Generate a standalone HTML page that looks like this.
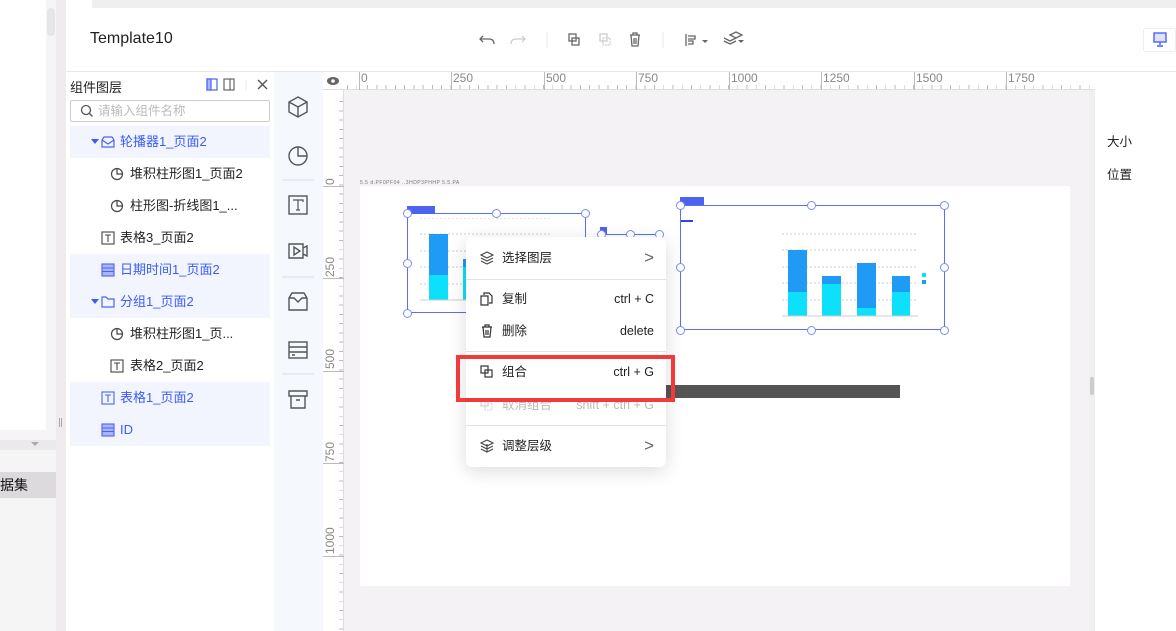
<!DOCTYPE html>
<html><head><meta charset="utf-8"><style>
*{margin:0;padding:0;box-sizing:border-box}
html,body{width:1176px;height:631px;overflow:hidden}
body{position:relative;background:#fff;font-family:"Liberation Sans","Noto Sans CJK SC",sans-serif;color:#222}
.a{position:absolute}
.row{position:absolute;left:70px;width:200px;height:32px;font-size:13px;line-height:32px}
.sel{background:#f3f5fe;color:#3b5cf5}
.mi{position:absolute;left:466px;width:200px;height:32px;font-size:12.5px;line-height:32px;color:#222}
.mi .k{position:absolute;right:12px;top:0}
.mi .t{position:absolute;left:36px}
.mi svg{position:absolute;left:14px;top:9px}
.h{position:absolute;width:9px;height:9px;border:1.3px solid #7b8cf7;border-radius:50%;background:#fff}
.rl{position:absolute;font-size:12px;color:#888}
</style></head><body>
<div class="a" style="left:0;top:0;width:56px;height:631px;background:#f5f5f5"></div>
<div class="a" style="left:0;top:0;width:46px;height:430px;background:#fff"></div>
<div class="a" style="left:46px;top:0;width:10px;height:430px;background:#f5f5f5"></div>
<div class="a" style="left:47px;top:8px;width:8px;height:28px;background:#e6e6e6;border-radius:4px"></div>
<div class="a" style="left:0;top:440px;width:56px;height:10px;background:#ece9ec"></div>
<div class="a" style="left:31px;top:442px;width:0;height:0;border-left:4px solid transparent;border-right:4px solid transparent;border-top:4px solid #aaa"></div>
<div class="a" style="left:0;top:472px;width:56px;height:26px;background:#dcdadc;font-size:14px;line-height:26px;color:#111">据集</div>
<div class="a" style="left:56px;top:0;width:10px;height:631px;background:#efebef"></div>
<div class="a" style="left:59px;top:418px;width:3px;height:9px;border-left:1px solid #aaa;border-right:1px solid #aaa"></div>
<div class="a" style="left:66px;top:0;width:1110px;height:8px;background:#f0eff0"></div>
<div class="a" style="left:66px;top:0;width:26px;height:8px;background:#fff"></div>
<div class="a" style="left:90px;top:30px;font-size:16px;color:#222">Template10</div>
<div class="a" style="left:66px;top:71px;width:1110px;height:1px;background:#e8e8ec"></div>
<svg class="a" style="left:478px;top:30px" width="280" height="20" fill="none" stroke="#666" stroke-width="1.3">
<path d="M5 6 L2 9 L5 12 M2 9 H11 Q16 9 16 14"/>
<path d="M44 6 L47 9 L44 12 M47 9 H38 Q33 9 33 14" stroke="#ccc"/>
<line x1="69" y1="2" x2="69" y2="18" stroke="#eee"/>
<rect x="91" y="4" width="7" height="7"/><rect x="94" y="8" width="7" height="7"/>
<rect x="122" y="4" width="7" height="7" stroke="#ccc"/><rect x="125" y="8" width="7" height="7" stroke="#ccc" stroke-dasharray="1.5 1"/>
<path d="M152 5h10M155 5v-2h4v2M153 5l1 11h6l1-11M156 8v6M158 8v6"/>
<line x1="185" y1="2" x2="185" y2="18" stroke="#eee"/>
<path d="M208 4v12M210 6h7v3h-7M210 11h5v3h-5"/><path d="M224 10l3 3 3-3z" fill="#666" stroke="none"/>
<path d="M252 5l6-3 6 3-6 3z"/><path d="M246 8l6 3 6-3M246 11l6 3 6-3"/><path d="M260 10l3 3 3-3z" fill="#666" stroke="none"/>
</svg>
<div class="a" style="left:1143px;top:28px;width:33px;height:24px;border:1px solid #eee;border-radius:3px"></div>
<svg class="a" style="left:1153px;top:32px" width="14" height="16" fill="none" stroke="#4b63f0" stroke-width="1.4"><rect x="1" y="1" width="12" height="9" fill="#dde3ff"/><path d="M7 10v3M4 14h6"/></svg>
<div class="a" style="left:70px;top:77px;font-size:13px">组件图层</div>
<svg class="a" style="left:206px;top:78px" width="64" height="14" fill="none" stroke-width="1.2"><rect x="1" y="1" width="10" height="11" stroke="#4b63f0"/><rect x="1" y="1" width="4" height="11" fill="#a9b6fb" stroke="#4b63f0"/><rect x="18" y="1" width="10" height="11" stroke="#666"/><line x1="24" y1="1" x2="24" y2="12" stroke="#666"/><line x1="40" y1="2" x2="40" y2="12" stroke="#eee"/><path d="M52 2l9 9M61 2l-9 9" stroke="#555" stroke-width="1.4"/></svg>
<div class="a" style="left:70px;top:100px;width:200px;height:22px;border:1px solid #ccc;border-radius:2px;font-size:12.5px;color:#bbb;line-height:20px;padding-left:27px">请输入组件名称</div>
<svg class="a" style="left:80px;top:104px" width="14" height="14" fill="none" stroke="#555" stroke-width="1.3"><circle cx="6" cy="6" r="4.5"/><path d="M9.5 9.5l3 3"/></svg>
<div class="row sel" style="top:126px"><span class="a" style="left:21px;top:13px;border-left:4px solid transparent;border-right:4px solid transparent;border-top:5px solid #3b5cf5"></span><svg class="a" style="left:31px;top:9px" width="14" height="14" fill="none" stroke="#4b63f0" stroke-width="1.2"><path d="M1 5l2-3h8l2 3v7H1z M1 5l6 4 6-4"/></svg><span class="a" style="left:50px">轮播器1_页面2</span></div>
<div class="row" style="top:158px"><svg class="a" style="left:40px;top:9px" width="14" height="14" fill="none" stroke="#444" stroke-width="1.2"><circle cx="7" cy="7" r="5.5"/><path d="M7 1.5V7h5.5"/></svg><span class="a" style="left:60px">堆积柱形图1_页面2</span></div>
<div class="row" style="top:190px"><svg class="a" style="left:40px;top:9px" width="14" height="14" fill="none" stroke="#444" stroke-width="1.2"><circle cx="7" cy="7" r="5.5"/><path d="M7 1.5V7h5.5"/></svg><span class="a" style="left:60px">柱形图-折线图1_...</span></div>
<div class="row" style="top:222px"><svg class="a" style="left:31px;top:9px" width="14" height="14" fill="none" stroke="#444" stroke-width="1.1"><rect x="1" y="1" width="12" height="12"/><path d="M4 4h6M7 4v7"/></svg><span class="a" style="left:50px">表格3_页面2</span></div>
<div class="row sel" style="top:254px"><svg class="a" style="left:31px;top:9px" width="14" height="14" fill="#a9b6fb" stroke="#4b63f0" stroke-width="1.1"><rect x="1" y="1" width="12" height="12"/><path d="M1 5h12M1 8.5h12"/></svg><span class="a" style="left:50px">日期时间1_页面2</span></div>
<div class="row sel" style="top:286px"><span class="a" style="left:21px;top:13px;border-left:4px solid transparent;border-right:4px solid transparent;border-top:5px solid #3b5cf5"></span><svg class="a" style="left:31px;top:9px" width="14" height="14" fill="none" stroke="#4b63f0" stroke-width="1.2"><path d="M1 2h4l2 2h6v8H1z"/></svg><span class="a" style="left:50px">分组1_页面2</span></div>
<div class="row" style="top:318px"><svg class="a" style="left:40px;top:9px" width="14" height="14" fill="none" stroke="#444" stroke-width="1.2"><circle cx="7" cy="7" r="5.5"/><path d="M7 1.5V7h5.5"/></svg><span class="a" style="left:60px">堆积柱形图1_页...</span></div>
<div class="row" style="top:350px"><svg class="a" style="left:40px;top:9px" width="14" height="14" fill="none" stroke="#444" stroke-width="1.1"><rect x="1" y="1" width="12" height="12"/><path d="M4 4h6M7 4v7"/></svg><span class="a" style="left:60px">表格2_页面2</span></div>
<div class="row sel" style="top:382px"><svg class="a" style="left:31px;top:9px" width="14" height="14" fill="none" stroke="#4b63f0" stroke-width="1.1"><rect x="1" y="1" width="12" height="12"/><path d="M4 4h6M7 4v7"/></svg><span class="a" style="left:50px">表格1_页面2</span></div>
<div class="row sel" style="top:414px"><svg class="a" style="left:31px;top:9px" width="14" height="14" fill="#a9b6fb" stroke="#4b63f0" stroke-width="1.1"><rect x="1" y="1" width="12" height="12"/><path d="M1 5h12M1 8.5h12"/></svg><span class="a" style="left:50px">ID</span></div>
<div class="a" style="left:274px;top:72px;width:49px;height:559px;background:#f5f8fd"></div>
<svg class="a" style="left:274px;top:72px" width="49" height="350" fill="none" stroke="#555" stroke-width="1.4">
<path d="M24 25l9 5v10l-9 5-9-5V30z M15 30l9 5 9-5M24 35v10"/>
<circle cx="24" cy="84" r="9"/><path d="M24 75v9h9"/>
<line x1="8" y1="108" x2="40" y2="108" stroke="#e4e8ee"/>
<rect x="15" y="124" width="18" height="18"/><path d="M19 128h10v2M24 128v10M22 138h4" stroke-width="1.2"/>
<path d="M15 172h14v14H15z M29 176l4-2v10l-4-2 M20 175v8l6-4z"/>
<line x1="8" y1="205" x2="40" y2="205" stroke="#e4e8ee"/>
<path d="M15 226l3-5h12l3 5v12H15z M15 226l5 0 4 4 4-4h5"/>
<rect x="15" y="270" width="18" height="16"/><path d="M15 275h18M15 280h18M18 283h3"/>
<line x1="8" y1="302" x2="40" y2="302" stroke="#e4e8ee"/>
<path d="M15 319h18v5H15z M17 324v12h14V324 M22 328h4"/>
</svg>
<div class="a" style="left:323px;top:72px;width:21px;height:559px;background:#fff;border-right:1px solid #ddd;border-left:1px solid #e4e4e8"></div>
<div class="a" style="left:323px;top:72px;width:21px;height:18px;background:#fff;border-bottom:1px solid #ddd"></div>
<svg class="a" style="left:326px;top:76px" width="14" height="10"><ellipse cx="7" cy="5" rx="6" ry="4" fill="#666"/><circle cx="7" cy="5" r="1.8" fill="#fff"/></svg>
<div class="a" style="left:344px;top:72px;width:751px;height:18px;background:#fff;border-bottom:1px solid #ddd;background-image:repeating-linear-gradient(90deg,transparent 0 8.25px,#bbb 8.25px 9.25px);background-size:100% 5px;background-repeat:repeat-x;background-position:15px 13px"></div>
<div class="a" style="left:344px;top:90px;width:751px;height:541px;background:#f5f2f5"></div>
<div class="a" style="left:323px;top:90px;width:21px;height:541px;background:#fff;border-right:1px solid #ddd;background-image:repeating-linear-gradient(180deg,transparent 0 8.25px,#bbb 8.25px 9.25px);background-size:5px 100%;background-repeat:repeat-y;background-position:16px 3px"></div>
<div class="a" style="left:359px;top:72px;width:1px;height:18px;background:#bbb"></div><span class="rl" style="left:361px;top:71px">0</span>
<div class="a" style="left:451px;top:72px;width:1px;height:18px;background:#bbb"></div><span class="rl" style="left:453px;top:71px">250</span>
<div class="a" style="left:544px;top:72px;width:1px;height:18px;background:#bbb"></div><span class="rl" style="left:546px;top:71px">500</span>
<div class="a" style="left:636px;top:72px;width:1px;height:18px;background:#bbb"></div><span class="rl" style="left:638px;top:71px">750</span>
<div class="a" style="left:729px;top:72px;width:1px;height:18px;background:#bbb"></div><span class="rl" style="left:731px;top:71px">1000</span>
<div class="a" style="left:821px;top:72px;width:1px;height:18px;background:#bbb"></div><span class="rl" style="left:823px;top:71px">1250</span>
<div class="a" style="left:914px;top:72px;width:1px;height:18px;background:#bbb"></div><span class="rl" style="left:916px;top:71px">1500</span>
<div class="a" style="left:1006px;top:72px;width:1px;height:18px;background:#bbb"></div><span class="rl" style="left:1008px;top:71px">1750</span>
<div class="a" style="left:323px;top:186px;width:21px;height:1px;background:#bbb"></div>
<div class="a" style="left:323px;top:278px;width:21px;height:1px;background:#bbb"></div>
<div class="a" style="left:323px;top:371px;width:21px;height:1px;background:#bbb"></div>
<div class="a" style="left:323px;top:463px;width:21px;height:1px;background:#bbb"></div>
<div class="a" style="left:323px;top:556px;width:21px;height:1px;background:#bbb"></div>
<span class="rl" style="left:323px;top:185px;transform:rotate(-90deg);transform-origin:0 0">0</span>
<span class="rl" style="left:323px;top:277px;transform:rotate(-90deg);transform-origin:0 0">250</span>
<span class="rl" style="left:323px;top:369px;transform:rotate(-90deg);transform-origin:0 0">500</span>
<span class="rl" style="left:323px;top:462px;transform:rotate(-90deg);transform-origin:0 0">750</span>
<span class="rl" style="left:323px;top:554px;transform:rotate(-90deg);transform-origin:0 0">1000</span>
<div class="a" style="left:360px;top:186px;width:710px;height:400px;background:#fff"></div>
<div class="a" style="left:360px;top:180px;font-size:5px;color:#777;letter-spacing:0.5px">5.5 d.PF0PF04 ..3HDP3PHHP 5.5.PA</div>
<div class="a" style="left:1089px;top:90px;width:6px;height:541px;background:#efefef"></div>
<div class="a" style="left:1090px;top:377px;width:4px;height:18px;background:#ccc;border-radius:2px"></div>
<div class="a" style="left:407px;top:213px;width:179px;height:100px;border:1px solid #5a6ff2"></div>
<div class="a" style="left:407px;top:206px;width:28px;height:8px;background:#4b63f0"></div>
<svg class="a" style="left:410px;top:218px" width="180" height="90"><g stroke="#ccc" stroke-dasharray="2 2"><line x1="10" y1="0" x2="140" y2="0"/><line x1="10" y1="16" x2="140" y2="16"/><line x1="10" y1="33" x2="140" y2="33"/><line x1="10" y1="49" x2="140" y2="49"/><line x1="10" y1="66" x2="140" y2="66"/></g>
<rect x="19" y="16" width="19" height="41" fill="#1f9af5"/><rect x="19" y="57" width="19" height="25" fill="#0ce0fb"/>
<rect x="53" y="41" width="8" height="8" fill="#1f9af5"/><rect x="53" y="49" width="8" height="33" fill="#0ce0fb"/><line x1="10" y1="82" x2="140" y2="82" stroke="#ccc"/></svg>
<div class="h" style="left:403px;top:209px"></div><div class="h" style="left:492px;top:209px"></div><div class="h" style="left:581px;top:209px"></div>
<div class="h" style="left:403px;top:259px"></div><div class="h" style="left:403px;top:309px"></div>
<div class="a" style="left:600px;top:227px;width:7px;height:8px;background:#4b63f0"></div>
<div class="a" style="left:602px;top:234px;width:60px;height:1px;background:#5a6ff2"></div>
<div class="h" style="left:597px;top:230px"></div><div class="h" style="left:626px;top:230px"></div><div class="h" style="left:655px;top:230px"></div>
<div class="a" style="left:680px;top:205px;width:265px;height:125px;border:1px solid #5a6ff2"></div>
<div class="a" style="left:680px;top:197px;width:24px;height:8px;background:#4b63f0"></div>
<div class="a" style="left:681px;top:220px;width:12px;height:2px;background:#3344dd"></div>
<svg class="a" style="left:770px;top:230px" width="175" height="100"><g stroke="#ccc" stroke-dasharray="2 2"><line x1="12" y1="4" x2="148" y2="4"/><line x1="12" y1="20" x2="148" y2="20"/><line x1="12" y1="37" x2="148" y2="37"/><line x1="12" y1="53" x2="148" y2="53"/><line x1="12" y1="70" x2="148" y2="70"/></g>
<rect x="18" y="20" width="19" height="42" fill="#1f9af5"/><rect x="18" y="62" width="19" height="24" fill="#0ce0fb"/>
<rect x="52" y="46" width="19" height="8" fill="#1f9af5"/><rect x="52" y="54" width="19" height="32" fill="#0ce0fb"/>
<rect x="87" y="33" width="19" height="45" fill="#1f9af5"/><rect x="87" y="78" width="19" height="8" fill="#0ce0fb"/>
<rect x="122" y="46" width="18" height="16" fill="#1f9af5"/><rect x="122" y="62" width="18" height="24" fill="#0ce0fb"/>
<line x1="12" y1="86" x2="148" y2="86" stroke="#ccc"/><rect x="152" y="43" width="4" height="4" fill="#0ce0fb"/><rect x="152" y="50" width="4" height="4" fill="#1f9af5"/></svg>
<div class="h" style="left:676px;top:201px"></div><div class="h" style="left:807px;top:201px"></div><div class="h" style="left:940px;top:201px"></div>
<div class="h" style="left:676px;top:263px"></div><div class="h" style="left:940px;top:263px"></div>
<div class="h" style="left:676px;top:326px"></div><div class="h" style="left:807px;top:326px"></div><div class="h" style="left:940px;top:326px"></div>
<div class="a" style="left:666px;top:385px;width:234px;height:13px;background:#555"></div>
<div class="a" style="left:466px;top:237px;width:200px;height:230px;background:#fff;border-radius:6px;box-shadow:0 4px 18px rgba(0,0,0,0.14)"></div>
<div class="mi" style="top:242px"><svg width="14" height="14" fill="none" stroke="#444" stroke-width="1.1"><path d="M7 1l6 3-6 3-6-3z M1 7l6 3 6-3 M1 10l6 3 6-3"/></svg><span class="t">选择图层</span><span class="k" style="font-size:17px;color:#666">&gt;</span></div>
<div class="a" style="left:466px;top:279px;width:200px;height:1px;background:#e2e2e2"></div>
<div class="mi" style="top:283px"><svg width="14" height="14" fill="none" stroke="#333" stroke-width="1.2"><path d="M4 3V1h5l3 3v7H9 M1 4h7v9H1z"/></svg><span class="t">复制</span><span class="k">ctrl + C</span></div>
<div class="mi" style="top:315px"><svg width="14" height="14" fill="none" stroke="#333" stroke-width="1.2"><path d="M2 3h10M5 3V1h4v2M3 3l1 10h6l1-10M6 6v5M8 6v5"/></svg><span class="t">删除</span><span class="k">delete</span></div>
<div class="a" style="left:466px;top:351px;width:200px;height:1px;background:#e2e2e2"></div>
<div class="mi" style="top:389px;color:#bbb"><svg width="14" height="14" fill="none" stroke="#ccc" stroke-width="1.1"><rect x="1" y="1" width="7" height="7"/><rect x="5" y="5" width="7" height="7" stroke-dasharray="1.5 1"/></svg><span class="t">取消组合</span><span class="k">shift + ctrl + G</span></div>
<div class="mi" style="top:356px"><svg width="14" height="14" fill="none" stroke="#333" stroke-width="1.2"><rect x="1" y="1" width="7" height="7"/><rect x="5" y="5" width="7" height="7"/></svg><span class="t">组合</span><span class="k">ctrl + G</span></div>
<div class="a" style="left:456px;top:355px;width:219px;height:47px;border:4px solid #f23a3a"></div>
<div class="a" style="left:466px;top:425px;width:200px;height:1px;background:#e2e2e2"></div>
<div class="mi" style="top:430px"><svg width="14" height="14" fill="none" stroke="#444" stroke-width="1.1"><path d="M7 1l6 3-6 3-6-3z M1 7l6 3 6-3 M1 10l6 3 6-3 M7 5v8"/></svg><span class="t">调整层级</span><span class="k" style="font-size:17px;color:#666">&gt;</span></div>
<div class="a" style="left:1107px;top:131px;font-size:12.5px">大小</div>
<div class="a" style="left:1107px;top:164px;font-size:12.5px">位置</div>
</body></html>
